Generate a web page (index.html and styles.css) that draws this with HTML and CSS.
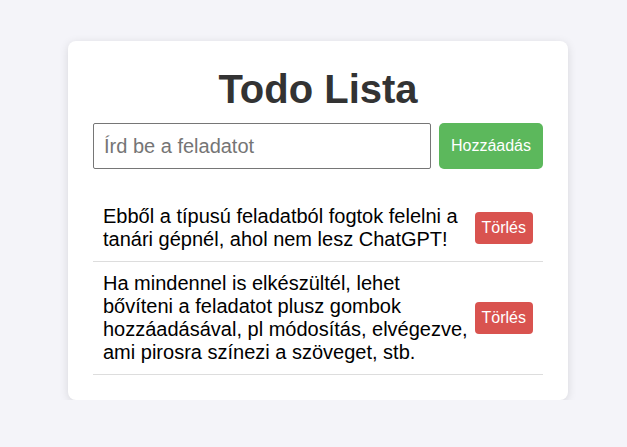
FILE: index.html
```html
<!DOCTYPE html>
<html>
<head>
    <title>Todo Lista</title>
    <!-- Styling with CSS -->
    <link rel="stylesheet" href="styles.css">
</head>
<body>
    <!-- The todo card -->
    <div class="todo-container">
        <h1>Todo Lista</h1>
        <!-- Input row -->
        <div class="input-row">
            <input type="text" placeholder="Írd be a feladatot" id="task_input" class="task-input">
            <button class="add-btn">Hozzáadás</button>
        </div>
        <!-- Task list -->
        <ul class="task-list">
            <li class="task">
                <span class="task-text">Ebből a típusú feladatból fogtok felelni a tanári gépnél, ahol nem lesz ChatGPT!</span>
                <button class="delete-btn">Törlés</button>
            </li>
            <li class="task">
                <span class="task-text">Ha mindennel is elkészültél, lehet bővíteni a feladatot plusz gombok hozzáadásával, pl módosítás, elvégezve, ami pirosra színezi a szöveget, stb.</span>
                <button class="delete-btn">Törlés</button>
            </li>
        </ul>
    </div>
</body>
</html>
```

FILE: styles.css
```css
/* Styling for the body */
* {
  box-sizing: border-box;
}

body {
  margin: 0;
  padding: 41px 0 0 9px;
  font-family: "Liberation Sans", Arial, sans-serif;
  background: #f4f4f9;
}

/* Styling for the todo card */
.todo-container {
  width: 500px;
  margin: 0 auto;
  background-color: #ffffff;
  border-radius: 8px;
  box-shadow: 0 2px 10px rgba(0, 0, 0, 0.12);
  padding: 25px;
}

/* Styling for heading */
h1 {
  margin: 0 0 11px;
  text-align: center;
  font-size: 40px;
  line-height: 46px;
  color: #333;
}

/* Styling for input row */
.input-row {
  display: flex;
  gap: 8px;
}

.task-input {
  flex: 1;
  height: 46px;
  padding: 10px;
  font-size: 20px;
  font-family: inherit;
  border: 1px solid #767676;
  border-radius: 2px;
}

.task-input::placeholder {
  color: #757575;
}

/* Styling for add button */
.add-btn {
  padding: 0 12px;
  border: none;
  border-radius: 5px;
  background-color: #5cb85c;
  color: #fff;
  font-size: 16px;
  font-family: inherit;
  cursor: pointer;
}

/* Styling for the list */
.task-list {
  list-style: none;
  margin: 26px 0 0;
  padding: 0;
}

.task {
  display: flex;
  justify-content: space-between;
  align-items: center;
  padding: 10px;
  border-bottom: 1px solid #ddd;
  font-size: 20px;
  line-height: 23px;
  color: #000;
}

/* Styling for delete button */
.delete-btn {
  flex-shrink: 0;
  padding: 7px;
  border: none;
  border-radius: 4px;
  background-color: #d9534f;
  color: #fff;
  font-size: 16px;
  font-family: inherit;
  line-height: 18px;
  cursor: pointer;
}
```
